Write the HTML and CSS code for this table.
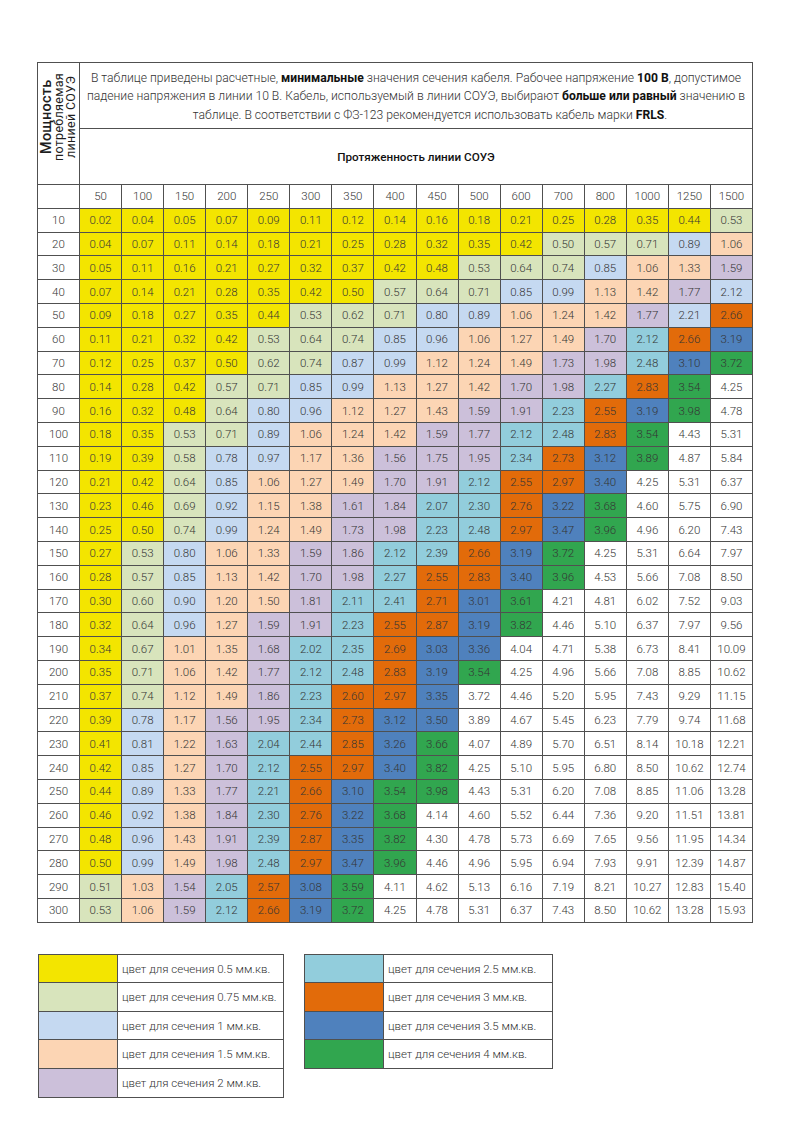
FILE: index.html
```html
<!DOCTYPE html>
<html lang="ru">
<head>
<meta charset="utf-8">
<title>Сечение кабеля СОУЭ</title>
<link rel="stylesheet" href="styles.css">
</head>
<body>
<div class="page">
<table class="sect">
<colgroup><col class="c-first"><col span="16"></colgroup>
<tr class="r-desc">
<th rowspan="2" class="power"><div class="power-label"><span class="pw-strong">Мощность</span><br>потребляемая<br>линией СОУЭ</div></th>
<td colspan="16" class="desc">В таблице приведены расчетные, <b>минимальные</b> значения сечения кабеля. Рабочее напряжение <b>100 В</b>, допустимое<br>падение напряжения в линии 10 В. Кабель, используемый в линии СОУЭ, выбирают <b>больше или равный</b> значению в<br><span class="desc-last">таблице. В соответствии с ФЗ-123 рекомендуется использовать кабель марки <b>FRLS</b>.</span></td>
</tr>
<tr class="r-len"><td colspan="16" class="len">Протяженность линии СОУЭ</td></tr>
<tr class="r"><th class="p"></th><td>50</td><td>100</td><td>150</td><td>200</td><td>250</td><td>300</td><td>350</td><td>400</td><td>450</td><td>500</td><td>600</td><td>700</td><td>800</td><td>1000</td><td>1250</td><td>1500</td></tr>
<tr class="r"><th class="p">10</th><td class="s05">0.02</td><td class="s05">0.04</td><td class="s05">0.05</td><td class="s05">0.07</td><td class="s05">0.09</td><td class="s05">0.11</td><td class="s05">0.12</td><td class="s05">0.14</td><td class="s05">0.16</td><td class="s05">0.18</td><td class="s05">0.21</td><td class="s05">0.25</td><td class="s05">0.28</td><td class="s05">0.35</td><td class="s05">0.44</td><td class="s075">0.53</td></tr>
<tr class="r"><th class="p">20</th><td class="s05">0.04</td><td class="s05">0.07</td><td class="s05">0.11</td><td class="s05">0.14</td><td class="s05">0.18</td><td class="s05">0.21</td><td class="s05">0.25</td><td class="s05">0.28</td><td class="s05">0.32</td><td class="s05">0.35</td><td class="s05">0.42</td><td class="s075">0.50</td><td class="s075">0.57</td><td class="s075">0.71</td><td class="s1">0.89</td><td class="s15">1.06</td></tr>
<tr class="r"><th class="p">30</th><td class="s05">0.05</td><td class="s05">0.11</td><td class="s05">0.16</td><td class="s05">0.21</td><td class="s05">0.27</td><td class="s05">0.32</td><td class="s05">0.37</td><td class="s05">0.42</td><td class="s05">0.48</td><td class="s075">0.53</td><td class="s075">0.64</td><td class="s075">0.74</td><td class="s1">0.85</td><td class="s15">1.06</td><td class="s15">1.33</td><td class="s2">1.59</td></tr>
<tr class="r"><th class="p">40</th><td class="s05">0.07</td><td class="s05">0.14</td><td class="s05">0.21</td><td class="s05">0.28</td><td class="s05">0.35</td><td class="s05">0.42</td><td class="s05">0.50</td><td class="s075">0.57</td><td class="s075">0.64</td><td class="s075">0.71</td><td class="s1">0.85</td><td class="s1">0.99</td><td class="s15">1.13</td><td class="s15">1.42</td><td class="s2">1.77</td><td class="s1">2.12</td></tr>
<tr class="r"><th class="p">50</th><td class="s05">0.09</td><td class="s05">0.18</td><td class="s05">0.27</td><td class="s05">0.35</td><td class="s05">0.44</td><td class="s075">0.53</td><td class="s075">0.62</td><td class="s075">0.71</td><td class="s1">0.80</td><td class="s1">0.89</td><td class="s15">1.06</td><td class="s15">1.24</td><td class="s15">1.42</td><td class="s2">1.77</td><td class="s1">2.21</td><td class="s3">2.66</td></tr>
<tr class="r"><th class="p">60</th><td class="s05">0.11</td><td class="s05">0.21</td><td class="s05">0.32</td><td class="s05">0.42</td><td class="s075">0.53</td><td class="s075">0.64</td><td class="s075">0.74</td><td class="s1">0.85</td><td class="s1">0.96</td><td class="s15">1.06</td><td class="s15">1.27</td><td class="s15">1.49</td><td class="s2">1.70</td><td class="s25">2.12</td><td class="s3">2.66</td><td class="s35">3.19</td></tr>
<tr class="r"><th class="p">70</th><td class="s05">0.12</td><td class="s05">0.25</td><td class="s05">0.37</td><td class="s05">0.50</td><td class="s075">0.62</td><td class="s075">0.74</td><td class="s1">0.87</td><td class="s1">0.99</td><td class="s15">1.12</td><td class="s15">1.24</td><td class="s15">1.49</td><td class="s2">1.73</td><td class="s2">1.98</td><td class="s25">2.48</td><td class="s35">3.10</td><td class="s4">3.72</td></tr>
<tr class="r"><th class="p">80</th><td class="s05">0.14</td><td class="s05">0.28</td><td class="s05">0.42</td><td class="s075">0.57</td><td class="s075">0.71</td><td class="s1">0.85</td><td class="s1">0.99</td><td class="s15">1.13</td><td class="s15">1.27</td><td class="s15">1.42</td><td class="s2">1.70</td><td class="s2">1.98</td><td class="s25">2.27</td><td class="s3">2.83</td><td class="s4">3.54</td><td>4.25</td></tr>
<tr class="r"><th class="p">90</th><td class="s05">0.16</td><td class="s05">0.32</td><td class="s05">0.48</td><td class="s075">0.64</td><td class="s1">0.80</td><td class="s1">0.96</td><td class="s15">1.12</td><td class="s15">1.27</td><td class="s15">1.43</td><td class="s2">1.59</td><td class="s2">1.91</td><td class="s25">2.23</td><td class="s3">2.55</td><td class="s35">3.19</td><td class="s4">3.98</td><td>4.78</td></tr>
<tr class="r"><th class="p">100</th><td class="s05">0.18</td><td class="s05">0.35</td><td class="s075">0.53</td><td class="s075">0.71</td><td class="s1">0.89</td><td class="s15">1.06</td><td class="s15">1.24</td><td class="s15">1.42</td><td class="s2">1.59</td><td class="s2">1.77</td><td class="s25">2.12</td><td class="s25">2.48</td><td class="s3">2.83</td><td class="s4">3.54</td><td>4.43</td><td>5.31</td></tr>
<tr class="r"><th class="p">110</th><td class="s05">0.19</td><td class="s05">0.39</td><td class="s075">0.58</td><td class="s1">0.78</td><td class="s1">0.97</td><td class="s15">1.17</td><td class="s15">1.36</td><td class="s2">1.56</td><td class="s2">1.75</td><td class="s2">1.95</td><td class="s25">2.34</td><td class="s3">2.73</td><td class="s35">3.12</td><td class="s4">3.89</td><td>4.87</td><td>5.84</td></tr>
<tr class="r"><th class="p">120</th><td class="s05">0.21</td><td class="s05">0.42</td><td class="s075">0.64</td><td class="s1">0.85</td><td class="s15">1.06</td><td class="s15">1.27</td><td class="s15">1.49</td><td class="s2">1.70</td><td class="s2">1.91</td><td class="s25">2.12</td><td class="s3">2.55</td><td class="s3">2.97</td><td class="s35">3.40</td><td>4.25</td><td>5.31</td><td>6.37</td></tr>
<tr class="r"><th class="p">130</th><td class="s05">0.23</td><td class="s05">0.46</td><td class="s075">0.69</td><td class="s1">0.92</td><td class="s15">1.15</td><td class="s15">1.38</td><td class="s2">1.61</td><td class="s2">1.84</td><td class="s25">2.07</td><td class="s25">2.30</td><td class="s3">2.76</td><td class="s35">3.22</td><td class="s4">3.68</td><td>4.60</td><td>5.75</td><td>6.90</td></tr>
<tr class="r"><th class="p">140</th><td class="s05">0.25</td><td class="s05">0.50</td><td class="s075">0.74</td><td class="s1">0.99</td><td class="s15">1.24</td><td class="s15">1.49</td><td class="s2">1.73</td><td class="s2">1.98</td><td class="s25">2.23</td><td class="s25">2.48</td><td class="s3">2.97</td><td class="s35">3.47</td><td class="s4">3.96</td><td>4.96</td><td>6.20</td><td>7.43</td></tr>
<tr class="r"><th class="p">150</th><td class="s05">0.27</td><td class="s075">0.53</td><td class="s1">0.80</td><td class="s15">1.06</td><td class="s15">1.33</td><td class="s2">1.59</td><td class="s2">1.86</td><td class="s25">2.12</td><td class="s25">2.39</td><td class="s3">2.66</td><td class="s35">3.19</td><td class="s4">3.72</td><td>4.25</td><td>5.31</td><td>6.64</td><td>7.97</td></tr>
<tr class="r"><th class="p">160</th><td class="s05">0.28</td><td class="s075">0.57</td><td class="s1">0.85</td><td class="s15">1.13</td><td class="s15">1.42</td><td class="s2">1.70</td><td class="s2">1.98</td><td class="s25">2.27</td><td class="s3">2.55</td><td class="s3">2.83</td><td class="s35">3.40</td><td class="s4">3.96</td><td>4.53</td><td>5.66</td><td>7.08</td><td>8.50</td></tr>
<tr class="r"><th class="p">170</th><td class="s05">0.30</td><td class="s075">0.60</td><td class="s1">0.90</td><td class="s15">1.20</td><td class="s15">1.50</td><td class="s2">1.81</td><td class="s25">2.11</td><td class="s25">2.41</td><td class="s3">2.71</td><td class="s35">3.01</td><td class="s4">3.61</td><td>4.21</td><td>4.81</td><td>6.02</td><td>7.52</td><td>9.03</td></tr>
<tr class="r"><th class="p">180</th><td class="s05">0.32</td><td class="s075">0.64</td><td class="s1">0.96</td><td class="s15">1.27</td><td class="s2">1.59</td><td class="s2">1.91</td><td class="s25">2.23</td><td class="s3">2.55</td><td class="s3">2.87</td><td class="s35">3.19</td><td class="s4">3.82</td><td>4.46</td><td>5.10</td><td>6.37</td><td>7.97</td><td>9.56</td></tr>
<tr class="r"><th class="p">190</th><td class="s05">0.34</td><td class="s075">0.67</td><td class="s15">1.01</td><td class="s15">1.35</td><td class="s2">1.68</td><td class="s25">2.02</td><td class="s25">2.35</td><td class="s3">2.69</td><td class="s35">3.03</td><td class="s35">3.36</td><td>4.04</td><td>4.71</td><td>5.38</td><td>6.73</td><td>8.41</td><td>10.09</td></tr>
<tr class="r"><th class="p">200</th><td class="s05">0.35</td><td class="s075">0.71</td><td class="s15">1.06</td><td class="s15">1.42</td><td class="s2">1.77</td><td class="s25">2.12</td><td class="s25">2.48</td><td class="s3">2.83</td><td class="s35">3.19</td><td class="s4">3.54</td><td>4.25</td><td>4.96</td><td>5.66</td><td>7.08</td><td>8.85</td><td>10.62</td></tr>
<tr class="r"><th class="p">210</th><td class="s05">0.37</td><td class="s075">0.74</td><td class="s15">1.12</td><td class="s15">1.49</td><td class="s2">1.86</td><td class="s25">2.23</td><td class="s3">2.60</td><td class="s3">2.97</td><td class="s35">3.35</td><td>3.72</td><td>4.46</td><td>5.20</td><td>5.95</td><td>7.43</td><td>9.29</td><td>11.15</td></tr>
<tr class="r"><th class="p">220</th><td class="s05">0.39</td><td class="s1">0.78</td><td class="s15">1.17</td><td class="s2">1.56</td><td class="s2">1.95</td><td class="s25">2.34</td><td class="s3">2.73</td><td class="s35">3.12</td><td class="s35">3.50</td><td>3.89</td><td>4.67</td><td>5.45</td><td>6.23</td><td>7.79</td><td>9.74</td><td>11.68</td></tr>
<tr class="r"><th class="p">230</th><td class="s05">0.41</td><td class="s1">0.81</td><td class="s15">1.22</td><td class="s2">1.63</td><td class="s25">2.04</td><td class="s25">2.44</td><td class="s3">2.85</td><td class="s35">3.26</td><td class="s4">3.66</td><td>4.07</td><td>4.89</td><td>5.70</td><td>6.51</td><td>8.14</td><td>10.18</td><td>12.21</td></tr>
<tr class="r"><th class="p">240</th><td class="s05">0.42</td><td class="s1">0.85</td><td class="s15">1.27</td><td class="s2">1.70</td><td class="s25">2.12</td><td class="s3">2.55</td><td class="s3">2.97</td><td class="s35">3.40</td><td class="s4">3.82</td><td>4.25</td><td>5.10</td><td>5.95</td><td>6.80</td><td>8.50</td><td>10.62</td><td>12.74</td></tr>
<tr class="r"><th class="p">250</th><td class="s05">0.44</td><td class="s1">0.89</td><td class="s15">1.33</td><td class="s2">1.77</td><td class="s25">2.21</td><td class="s3">2.66</td><td class="s35">3.10</td><td class="s4">3.54</td><td class="s4">3.98</td><td>4.43</td><td>5.31</td><td>6.20</td><td>7.08</td><td>8.85</td><td>11.06</td><td>13.28</td></tr>
<tr class="r"><th class="p">260</th><td class="s05">0.46</td><td class="s1">0.92</td><td class="s15">1.38</td><td class="s2">1.84</td><td class="s25">2.30</td><td class="s3">2.76</td><td class="s35">3.22</td><td class="s4">3.68</td><td>4.14</td><td>4.60</td><td>5.52</td><td>6.44</td><td>7.36</td><td>9.20</td><td>11.51</td><td>13.81</td></tr>
<tr class="r"><th class="p">270</th><td class="s05">0.48</td><td class="s1">0.96</td><td class="s15">1.43</td><td class="s2">1.91</td><td class="s25">2.39</td><td class="s3">2.87</td><td class="s35">3.35</td><td class="s4">3.82</td><td>4.30</td><td>4.78</td><td>5.73</td><td>6.69</td><td>7.65</td><td>9.56</td><td>11.95</td><td>14.34</td></tr>
<tr class="r"><th class="p">280</th><td class="s05">0.50</td><td class="s1">0.99</td><td class="s15">1.49</td><td class="s2">1.98</td><td class="s25">2.48</td><td class="s3">2.97</td><td class="s35">3.47</td><td class="s4">3.96</td><td>4.46</td><td>4.96</td><td>5.95</td><td>6.94</td><td>7.93</td><td>9.91</td><td>12.39</td><td>14.87</td></tr>
<tr class="r"><th class="p">290</th><td class="s075">0.51</td><td class="s15">1.03</td><td class="s2">1.54</td><td class="s25">2.05</td><td class="s3">2.57</td><td class="s35">3.08</td><td class="s4">3.59</td><td>4.11</td><td>4.62</td><td>5.13</td><td>6.16</td><td>7.19</td><td>8.21</td><td>10.27</td><td>12.83</td><td>15.40</td></tr>
<tr class="r"><th class="p">300</th><td class="s075">0.53</td><td class="s15">1.06</td><td class="s2">1.59</td><td class="s25">2.12</td><td class="s3">2.66</td><td class="s35">3.19</td><td class="s4">3.72</td><td>4.25</td><td>4.78</td><td>5.31</td><td>6.37</td><td>7.43</td><td>8.50</td><td>10.62</td><td>13.28</td><td>15.93</td></tr>
</table>

<div class="legend">
<table class="leg leg-left">
<tr><td class="sw s05"></td><td class="lt">цвет для сечения 0.5 мм.кв.</td></tr>
<tr><td class="sw s075"></td><td class="lt">цвет для сечения 0.75 мм.кв.</td></tr>
<tr><td class="sw s1"></td><td class="lt">цвет для сечения 1 мм.кв.</td></tr>
<tr><td class="sw s15"></td><td class="lt">цвет для сечения 1.5 мм.кв.</td></tr>
<tr><td class="sw s2"></td><td class="lt">цвет для сечения 2 мм.кв.</td></tr>
</table>
<table class="leg leg-right">
<tr><td class="sw s25"></td><td class="lt">цвет для сечения 2.5 мм.кв.</td></tr>
<tr><td class="sw s3"></td><td class="lt">цвет для сечения 3 мм.кв.</td></tr>
<tr><td class="sw s35"></td><td class="lt">цвет для сечения 3.5 мм.кв.</td></tr>
<tr><td class="sw s4"></td><td class="lt">цвет для сечения 4 мм.кв.</td></tr>
</table>
</div>
</div>
</body>
</html>
```
FILE: styles.css
```css
html, body {
  margin: 0;
  padding: 0;
  background: #ffffff;
}
body {
  font-family: Roboto, "Open Sans", "Liberation Sans", sans-serif;
  color: #333333;
}
.page {
  padding: 62px 0 0 37px;
}
.sect {
  border-collapse: collapse;
  table-layout: fixed;
  width: 716px;
}
.c-first {
  width: 42px;
}
.sect td, .sect th {
  border: 1px solid #505050;
  padding: 0;
  text-align: center;
  vertical-align: middle;
  font-weight: 300;
  font-size: 11.5px;
  color: #353535;
  white-space: nowrap;
  overflow: hidden;
}
.r-desc { height: 66px; }
.r-len { height: 56px; }
.r { height: 23.8px; }

.power {
  vertical-align: top !important;
}
.power-label {
  writing-mode: vertical-rl;
  transform: rotate(180deg);
  height: 96px;
  margin: 6px auto 0;
  text-align: center;
  font-size: 12.5px;
  line-height: 12px;
  letter-spacing: 0.3px;
  font-weight: 400;
  color: #1e1e1e;
}
.pw-strong {
  font-size: 14.5px;
  font-weight: 500;
  letter-spacing: 0.2px;
}
.desc {
  font-size: 12.15px !important;
  line-height: 18.5px;
  padding-top: 2px !important;
  color: #333 !important;
}
.desc b {
  font-weight: 700;
  color: #111;
}
.desc-last {
  display: inline-block;
  padding-left: 28px;
}
.len {
  font-size: 11.7px !important;
  font-weight: 500 !important;
  color: #111 !important;
  padding-top: 1px !important;
}

.s05 { background: #f3e500; }
.s075 { background: #d8e4bc; }
.s1 { background: #c5d9f1; }
.s15 { background: #fcd5b4; }
.s2 { background: #ccc0da; }
.s25 { background: #92cddc; }
.s3 { background: #e26b0a; }
.s35 { background: #4f81bd; }
.s4 { background: #31a64f; }

.legend {
  display: flex;
  align-items: flex-start;
  gap: 20px;
  margin-top: 31px;
  padding-left: 1px;
}
.leg {
  border-collapse: collapse;
  table-layout: fixed;
}
.leg td {
  border: 1px solid #505050;
  height: 27.6px;
  padding: 0;
}
.leg .sw {
  width: 78px;
}
.leg-left .lt { width: 161px; }
.leg-right .lt { width: 164px; }
.leg .lt {
  font-size: 11.5px;
  font-weight: 300;
  color: #333;
  padding-left: 4px;
  white-space: nowrap;
}
```
